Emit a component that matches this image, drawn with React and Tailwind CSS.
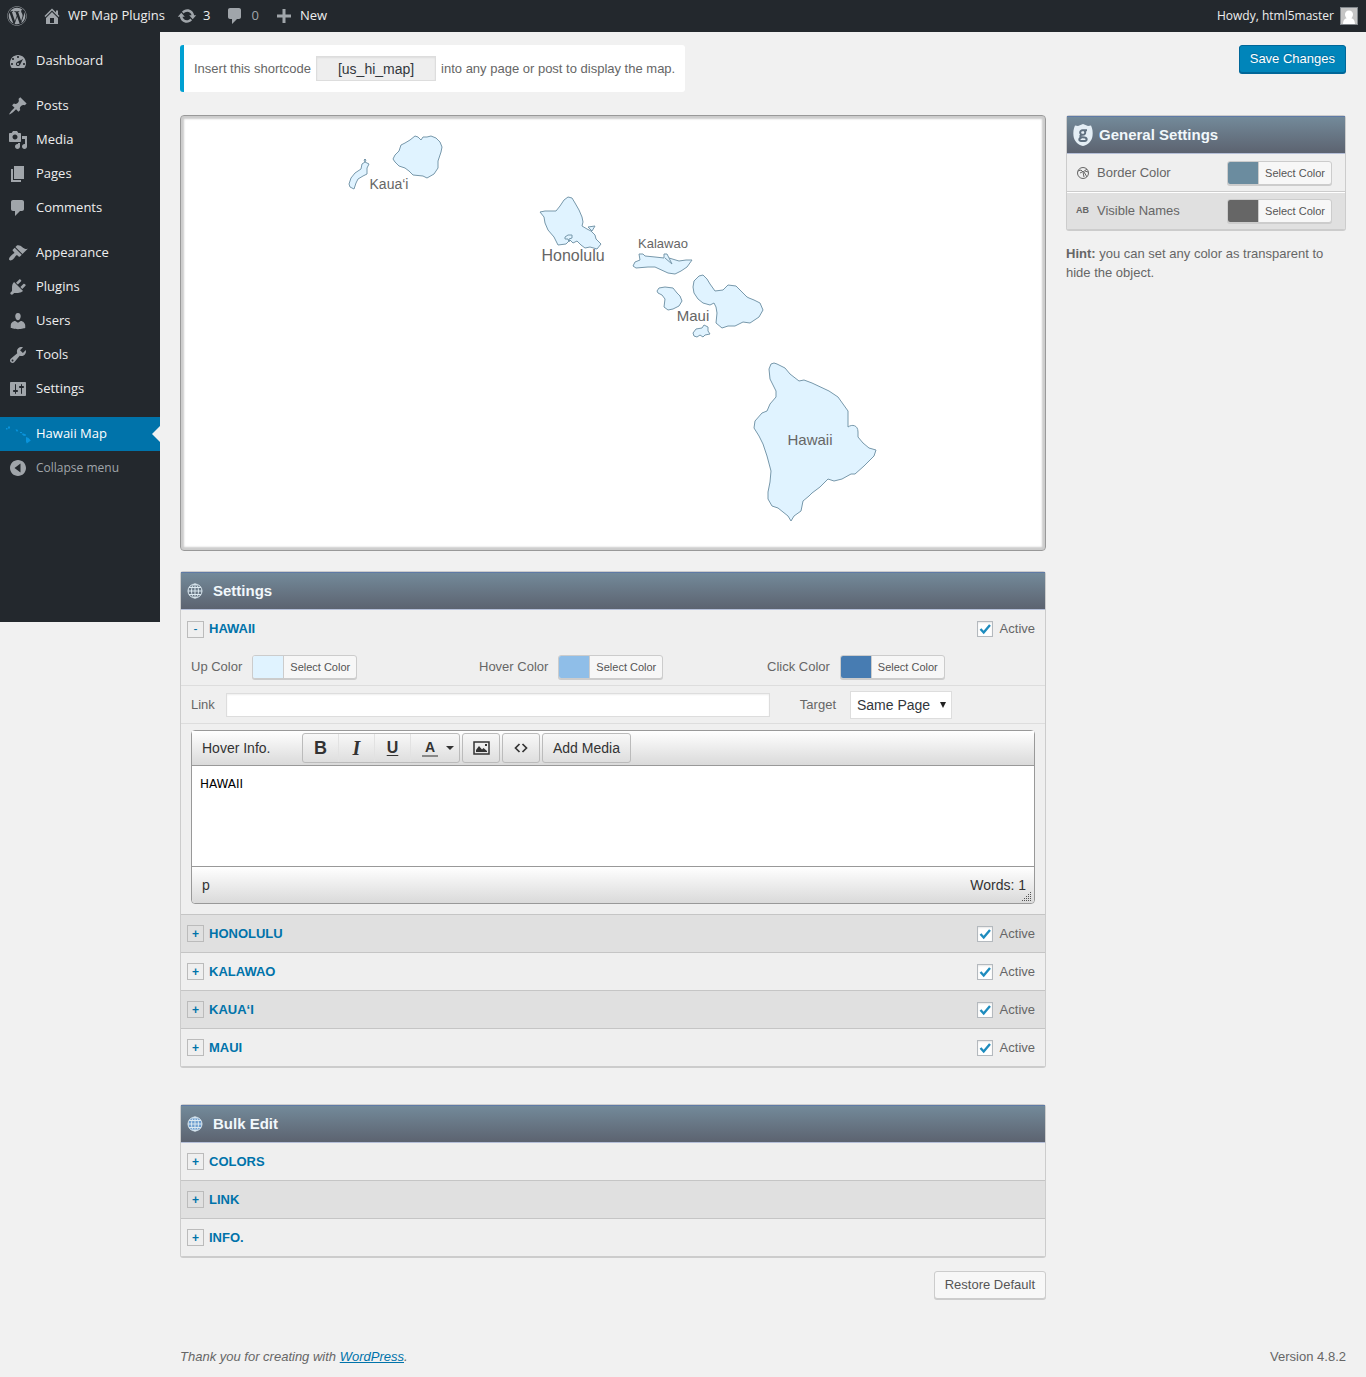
import { FaWordpress } from "react-icons/fa";
import clsx from "clsx";
import { useState } from "react";

const icons = {
  home: "M16 8.5l1.53 1.53-1.06 1.06L10 4.6l-6.47 6.49-1.06-1.06L10 2.5l4 4v-2h2v4zm-6-2.46l6 5.99V18H4v-5.97zM12 17v-5H8v5h4z",
  update:
    "M10.2 3.28c3.53 0 6.43 2.61 6.92 6h2.08l-3.5 4-3.5-4h2.32c-.45-1.97-2.21-3.45-4.32-3.45-1.45 0-2.73.71-3.54 1.78L4.95 5.66C6.23 4.2 8.11 3.28 10.2 3.28zm-.4 13.44c-3.52 0-6.43-2.61-6.92-6H.8l3.5-4c1.17 1.33 2.33 2.67 3.5 4H5.48c.45 1.97 2.21 3.45 4.32 3.45 1.45 0 2.73-.71 3.54-1.78l1.71 1.95c-1.28 1.46-3.15 2.38-5.25 2.38z",
  comments:
    "M5 2h9c1.1 0 2 .9 2 2v7c0 1.1-.9 2-2 2h-2l-5 5v-5H5c-1.1 0-2-.9-2-2V4c0-1.1.9-2 2-2z",
  plus: "M17 8.5v3h-5.5v5.5h-3v-5.5H3v-3h5.5V3h3v5.5z",
  dashboard:
    "M3.76 17.01h12.48C17.34 15.63 18 13.9 18 12c0-4.41-3.58-8-8-8s-8 3.59-8 8c0 1.9.66 3.63 1.76 5.01zM9 6c0-.55.45-1 1-1s1 .45 1 1c0 .56-.45 1-1 1s-1-.44-1-1zM4 8c0-.55.45-1 1-1s1 .45 1 1c0 .56-.45 1-1 1s-1-.44-1-1zm4.52 3.4c.84-.83 6.51-3.5 6.51-3.5s-2.66 5.68-3.49 6.51c-.84.84-2.18.84-3.02 0-.83-.83-.83-2.18 0-3.01zM3 13c0-.55.45-1 1-1s1 .45 1 1c0 .56-.45 1-1 1s-1-.44-1-1zm6 0c0 .55.45 1 1 1s1-.45 1-1c0-.56-.45-1-1-1s-1 .44-1 1zm6 0c0-.55.45-1 1-1s1 .45 1 1c0 .56-.45 1-1 1s-1-.44-1-1z",
  post: "M10.44 3.02l1.82-1.82 6.36 6.35-1.83 1.82c-1.05-.68-2.48-.57-3.41.36l-.75.75c-.92.93-1.04 2.35-.35 3.41l-1.83 1.82-2.41-2.41-2.8 2.79c-.42.42-3.38 2.71-3.8 2.29s1.86-3.39 2.28-3.81l2.79-2.79L4.1 9.36l1.83-1.82c1.05.69 2.48.57 3.4-.36l.75-.75c.93-.92 1.05-2.35.36-3.41z",
  media:
    "M13 11V4c0-.55-.45-1-1-1h-1.67L9 1H5L3.67 3H2c-.55 0-1 .45-1 1v7c0 .55.45 1 1 1h10c.55 0 1-.45 1-1zM7 4.5c1.38 0 2.5 1.12 2.5 2.5S8.38 9.5 7 9.5 4.5 8.38 4.5 7 5.62 4.5 7 4.5zM14 6h5v10.5c0 1.38-1.12 2.5-2.5 2.5S14 17.88 14 16.5s1.12-2.5 2.5-2.5c.17 0 .34.02.5.05V9h-3V6zm-4 8.05V13h2v3.5c0 1.38-1.12 2.5-2.5 2.5S7 17.88 7 16.5 8.12 14 9.5 14c.17 0 .34.02.5.05z",
  page: "M6 15V2h10v13H6zm-1 1h8v2H3V5h2v11z",
  appearance:
    "M14.48 11.06L7.41 3.99l1.5-1.5c.5-.56 2.3-.47 3.51.32 1.21.8 1.43 1.28 2.91 2.1 1.18.64 2.45 1.26 4.45.85zm-.71.71L6.7 4.7 4.93 6.47c-.39.39-.39 1.02 0 1.41l1.06 1.06c.39.39.39 1.03 0 1.42-.6.6-1.43 1.11-2.21 1.69-.35.26-.7.53-1.01.84C1.43 14.23.4 16.08 1.4 17.07c.99 1 2.84-.03 4.18-1.36.31-.31.58-.66.85-1.02.57-.78 1.08-1.61 1.69-2.21.39-.39 1.02-.39 1.41 0l1.06 1.06c.39.39 1.02.39 1.41 0z",
  plugins:
    "M13.11 4.36L9.87 7.6 8 5.73l3.24-3.24c.35-.34 1.05-.2 1.56.32.52.51.66 1.21.31 1.55zm-8 1.77l.91-1.12 9.01 9.01-1.19.84c-.71.71-2.63 1.16-3.82 1.16H6.14L4.9 17.26c-.59.59-1.54.59-2.12 0-.59-.58-.59-1.53 0-2.12l1.24-1.24v-3.88c0-1.13.4-3.19 1.09-3.89zm7.26 3.97l3.24-3.24c.34-.35 1.04-.21 1.55.31.52.51.66 1.21.31 1.55l-3.24 3.25z",
  users:
    "M10 9.25c-2.27 0-2.73-3.44-2.73-3.44C7 4.02 7.82 2 9.97 2c2.16 0 2.98 2.02 2.71 3.81 0 0-.41 3.44-2.68 3.44zm0 2.57L12.72 10c2.39 0 4.52 2.33 4.52 4.53v2.49s-3.65 1.13-7.24 1.13c-3.65 0-7.24-1.13-7.24-1.13v-2.49c0-2.25 1.94-4.48 4.47-4.48z",
  tools:
    "M16.68 9.77c-1.34 1.34-3.3 1.67-4.95.99l-5.41 6.52c-.99.99-2.59.99-3.58 0s-.99-2.59 0-3.57l6.52-5.42c-.68-1.65-.35-3.61.99-4.95 1.28-1.28 3.12-1.62 4.72-1.06l-2.89 2.89 2.82 2.82 2.86-2.87c.53 1.58.18 3.39-1.08 4.65zM3.81 16.21c.4.39 1.04.39 1.43 0 .4-.4.4-1.04 0-1.43-.39-.4-1.03-.4-1.43 0-.39.39-.39 1.03 0 1.43z",
  settings:
    "M18 16V4c0-.55-.45-1-1-1H3c-.55 0-1 .45-1 1v12c0 .55.45 1 1 1h14c.55 0 1-.45 1-1zM8 11h1c.55 0 1 .45 1 1s-.45 1-1 1H8v1.5c0 .28-.22.5-.5.5s-.5-.22-.5-.5V13H6c-.55 0-1-.45-1-1s.45-1 1-1h1V5.5c0-.28.22-.5.5-.5s.5.22.5.5V11zm5-2h-1c-.55 0-1-.45-1-1s.45-1 1-1h1V5.5c0-.28.22-.5.5-.5s.5.22.5.5V7h1c.55 0 1 .45 1 1s-.45 1-1 1h-1v5.5c0 .28-.22.5-.5.5s-.5-.22-.5-.5V9z",
  collapse:
    "M10 2c4.42 0 8 3.58 8 8s-3.58 8-8 8-8-3.58-8-8 3.58-8 8-8zM12.5 14.5v-9L6.5 10z",
};

const menuGroups = [
  [{ label: "Dashboard", icon: "dashboard" }],
  [
    { label: "Posts", icon: "post" },
    { label: "Media", icon: "media" },
    { label: "Pages", icon: "page" },
    { label: "Comments", icon: "comments" },
  ],
  [
    { label: "Appearance", icon: "appearance" },
    { label: "Plugins", icon: "plugins" },
    { label: "Users", icon: "users" },
    { label: "Tools", icon: "tools" },
    { label: "Settings", icon: "settings" },
  ],
];

const islands = [
  // Kaua'i
  "M349 184L351 178 355 173 361 169 362 164 365 162 369 164 367 168 367 174 363 176 358 179 356 183 354 189 350 187z",
  "M364 160l1-1 1 1-1 2z",
  "M393 159L395 155 399 151 401 145 405 143 410 140 415 136 418 137 421 140 423 137 427 137 431 136 436 138 440 142 442 147 441 152 439 158 438 161 438 168 434 174 427 178 423 176 413 175 409 171 405 168 399 166 395 162z",
  // Honolulu
  "M540 212L545 211 556 211 560 206 564 200 568 197 572 198 575 203 579 210 582 217 583 222 582 226 587 229 591 231 595 235 596 239 601 244 597 249 590 247 585 248 581 245 577 241 573 243 570 240 566 244 558 245 554 237 548 230 545 223 544 217z",
  "M588 227l7-1-3 5zM565 237l3-2 4 0 0 3-3 1 0 3-1-3-3 0z",
  // Kalawao
  "M633 266L635 262 640 260 639 254 643 254 645 256 655 257 664 258 664 254 667 254 669 258 679 261 686 260 692 260 687 267 681 271 675 274 668 273 655 267 648 267 636 268z",
  "M665 258l7 6-3-6",
  // Maui
  "M657 291L659 288 665 287 673 288 677 293 680 296 682 301 679 306 673 309 668 310 664 307 665 299 662 295 658 293z",
  "M693 287L694 281 699 276 703 275 707 279 710 284 715 291 723 290 728 285 736 286 742 292 747 297 749 298 754 300 760 303 763 310 759 317 750 323 743 322 735 326 728 326 722 328 716 323 717 313 716 307 714 303 710 305 703 303 698 299 694 293z",
  "M693 333L696 329 702 328 704 325 708 327 708 331 710 334 705 335 703 337 700 335 697 337 694 336z",
  // Hawaii
  "M774 363L777 364 785 368 790 374 799 381 804 380 812 383 829 391 838 397 848 411 848 427C852 424 858 425 858 432L858 437 863 443 869 448 876 450 874 456 864 466 855 474 851 474 842 479 834 481 828 479 820 487 812 493 809 496 803 501 801 511 794 516 791 521 788 516 778 508 772 506 768 499 768 492 770 482 771 471 767 456 763 444 759 436 754 428 755 421 762 413 767 411 770 404 776 397 776 391 770 379 769 369 771 364z",
];

const mapLabels = [
  { text: "Kaua‘i", x: 389, y: 189, size: 14 },
  { text: "Honolulu", x: 573, y: 261, size: 16 },
  { text: "Kalawao", x: 663, y: 248, size: 13 },
  { text: "Maui", x: 693, y: 321, size: 15 },
  { text: "Hawaii", x: 810, y: 445, size: 15 },
];

function Dashicon({ name, className }) {
  return (
    <svg
      viewBox="0 0 20 20"
      fill="currentColor"
      fillRule="evenodd"
      className={clsx("size-5 shrink-0", className)}
    >
      <path d={icons[name]} />
    </svg>
  );
}

function AdminBar() {
  return (
    <header className="flex h-8 items-center justify-between bg-[#23282d] pr-2 pl-[7px] font-['Open_Sans',sans-serif] text-[13px] text-[#eee]">
      <div className="flex items-center">
        <a href="#wp" aria-label="About WordPress">
          <FaWordpress className="size-5 text-[#a0a5aa]" />
        </a>
        <a href="#site" className="ml-[15px] flex items-center gap-1.5">
          <Dashicon name="home" className="text-[#a0a5aa]" />
          WP Map Plugins
        </a>
        <a href="#updates" className="ml-3 flex items-center gap-1.5">
          <Dashicon name="update" className="text-[#a0a5aa]" />3
        </a>
        <a href="#comments" className="ml-[15px] flex items-center gap-1.5">
          <Dashicon name="comments" className="text-[#a0a5aa]" />
          <span className="text-[#a0a5aa]">0</span>
        </a>
        <a href="#new" className="ml-[15px] flex items-center gap-1.5">
          <Dashicon name="plus" className="text-[#a0a5aa]" />
          New
        </a>
      </div>
      <a href="#profile" className="flex items-center gap-1.5 text-xs">
        Howdy, html5master
        <svg viewBox="0 0 18 18" className="size-[18px]">
          <path d="M0 0h18v18H0z" fill="#82878c" />
          <path d="M1 1h16v16H1z" fill="#c5c5c5" />
          <path
            d="M9 3.5c2.6 0 4 1.8 4 4 0 1.5-.7 2.9-1.7 3.7 2 .6 3.5 1.7 3.7 5.8H3c.2-4.1 1.7-5.2 3.7-5.8C5.7 10.4 5 9 5 7.5c0-2.2 1.4-4 4-4z"
            fill="#fff"
          />
        </svg>
      </a>
    </header>
  );
}

function Sidebar() {
  return (
    <nav className="w-40 shrink-0 self-start bg-[#23282d] pt-3 pb-[137px] font-['Open_Sans',sans-serif] text-[13px] text-[#eee]">
      {menuGroups.map((group, index) => (
        <ul key={`menu-group-${index}`} className="mb-[11px]">
          {group.map((item) => (
            <li key={item.label}>
              <a
                href={`#${item.icon}`}
                className="flex h-[34px] items-center gap-2 pl-2"
              >
                <Dashicon name={item.icon} className="text-[#a0a5aa]" />
                {item.label}
              </a>
            </li>
          ))}
        </ul>
      ))}
      <a
        href="#hawaii-map"
        className="relative flex h-[34px] items-center gap-2 bg-[#0073aa] pl-2 text-white"
      >
        <svg
          viewBox="0 0 20 20"
          fill="#0a94dc"
          className="size-5 shrink-0 overflow-visible"
        >
          <path d="M-2 4h1.5v1.5H-2zM0 2.5h2v2H0zM7.500 5.500h1.800l1 1.700-1.800.3zM12 8h2v1h-2zM13.500 9.800l2-.3 2.500 1-.5 1.500-2-.3zM18 13l2.500 1 2.300 2.500-2 1.500-2 1.500-.8-2z" />
        </svg>
        Hawaii Map
        <span className="absolute top-[9px] right-0 border-y-8 border-r-8 border-y-transparent border-r-[#f1f1f1]" />
      </a>
      <button
        type="button"
        className="flex h-[34px] items-center gap-2 pl-2 text-xs text-[#a0a5aa]"
      >
        <Dashicon name="collapse" />
        Collapse menu
      </button>
    </nav>
  );
}

function IslandMap() {
  return (
    <div className="rounded border border-[#999] bg-white p-px shadow-[inset_0_0_2px_3px_#ccc]">
      <svg viewBox="182 117 862 432" className="block w-full">
        <g fill="#e0f3ff" stroke="#7798ab" strokeLinejoin="round">
          {islands.map((d) => (
            <path key={d} d={d} />
          ))}
        </g>
        <g fill="#666" textAnchor="middle">
          {mapLabels.map((label) => (
            <text
              key={label.text}
              x={label.x}
              y={label.y}
              fontSize={label.size}
            >
              {label.text}
            </text>
          ))}
        </g>
      </svg>
    </div>
  );
}

function ColorPicker({ label, color }) {
  return (
    <button
      type="button"
      aria-label={`${label}: Select Color`}
      className="flex h-6 overflow-hidden rounded-[3px] border border-[#ccc] bg-[#f7f7f7] text-[11px] text-[#555] shadow-[0_1px_0_#ccc]"
    >
      <span className={clsx("h-full w-[30px]", color)} />
      <span className="h-full border-l border-[#ccc] px-1.5 leading-[22px]">
        Select Color
      </span>
    </button>
  );
}

function Globe({ className }) {
  return (
    <svg
      viewBox="0 0 16 16"
      fill="none"
      stroke="#dbe8f0"
      className={clsx("size-4 shrink-0", className)}
    >
      <circle cx="8" cy="8" r="7" fill="currentColor" />
      <ellipse cx="8" cy="8" rx="3.5" ry="7" />
      <path d="M8 1v14M1 8h14M2 4.5h12M2 11.5h12" />
    </svg>
  );
}

function PanelHeader({ icon, title, className }) {
  return (
    <h2
      className={clsx(
        "flex h-[38px] items-center border-t border-b border-t-[#5f7aa5] border-b-[#b5bfd8] bg-linear-to-b from-[#738a9a] to-[#5c6370] pl-1.5 text-[15px] font-bold text-[#f1f7fb]",
        className
      )}
    >
      {icon}
      {title}
    </h2>
  );
}

function SectionToggle({ label, open, onToggle }) {
  return (
    <button
      type="button"
      onClick={onToggle}
      aria-expanded={open}
      className="flex items-center gap-[5px] text-[13px] font-bold text-[#0073aa] uppercase"
    >
      <span
        className={clsx(
          "flex size-[17px] items-center justify-center border border-[#bbb] text-xs leading-none",
          open && "font-normal"
        )}
      >
        {open ? "-" : "+"}
      </span>
      {label}
    </button>
  );
}

function ActiveCheckbox() {
  return (
    <label className="flex items-center gap-[7px]">
      <span className="grid size-4">
        <input
          type="checkbox"
          defaultChecked
          className="peer col-start-1 row-start-1 size-4 appearance-none border border-[#b4b9be] bg-white shadow-[inset_0_1px_2px_rgba(0,0,0,0.1)]"
        />
        <svg
          viewBox="0 0 16 16"
          fill="none"
          stroke="#1e8cbe"
          strokeWidth="2.4"
          className="pointer-events-none invisible col-start-1 row-start-1 size-4 peer-checked:visible"
        >
          <path d="M3.5 8l3.2 3.500L13 4" />
        </svg>
      </span>
      Active
    </label>
  );
}

const toolButton =
  "flex h-[30px] items-center justify-center rounded-[3px] border border-[#bbb] bg-linear-to-b from-[#f8f8f8] to-[#dedede] text-[#333]";

function Editor() {
  return (
    <div className="mx-2.5 my-1.5 rounded-sm border border-[#999] bg-white text-sm text-[#333]">
      <div className="flex h-[35px] items-center gap-0.5 border-b border-[#999] bg-linear-to-b from-white to-[#dadada]">
        <span className="w-[108px] pl-2.5">Hover Info.</span>
        <div className="flex h-[30px] rounded-[3px] border border-[#bbb] bg-linear-to-b from-[#f8f8f8] to-[#dedede]">
          <button
            type="button"
            className="w-9 border-r border-[#e2e2e2] text-lg leading-none font-bold"
          >
            B
          </button>
          <button
            type="button"
            className="w-9 border-r border-[#e2e2e2] font-['Liberation_Serif',serif] text-xl leading-none font-bold italic"
          >
            I
          </button>
          <button
            type="button"
            className="w-9 border-r border-[#e2e2e2] text-base leading-none font-bold underline underline-offset-2"
          >
            U
          </button>
          <button
            type="button"
            aria-label="Text color"
            className="flex w-12 items-center justify-end gap-2 pr-[5px] font-bold"
          >
            <span className="border-b-2 border-[#888] px-[3px] leading-4">
              A
            </span>
            <span className="border-x-4 border-t-4 border-x-transparent border-t-[#333]" />
          </button>
        </div>
        <button
          type="button"
          aria-label="Insert image"
          className={clsx(toolButton, "w-[38px]")}
        >
          <svg viewBox="0 0 17 14" className="h-3.5 w-[17px]">
            <path d="M1 1h15v12H1z" fill="none" stroke="#333" strokeWidth="1.5" />
            <path d="M3 11V9l3-4 3 3.5L10.500 7 14 10v1zM12 3h2v2h-2z" fill="#333" />
          </svg>
        </button>
        <button
          type="button"
          aria-label="Source code"
          className={clsx(toolButton, "w-[38px]")}
        >
          <svg viewBox="0 0 14 10" className="h-2.5 w-3.5">
            <path
              d="M5.5 1l-4 4 4 4M8.500 1l4 4-4 4"
              fill="none"
              stroke="#333"
              strokeWidth="1.7"
            />
          </svg>
        </button>
        <button type="button" className={clsx(toolButton, "px-2.5")}>
          Add Media
        </button>
      </div>
      <textarea
        aria-label="Hover Info."
        defaultValue="HAWAII"
        className="block h-[100px] w-full resize-none p-2 pt-2.5 font-['DejaVu_Sans',sans-serif] text-xs text-black outline-none"
      />
      <div className="flex h-[37px] items-center justify-between rounded-b-sm border-t border-[#999] bg-linear-to-b from-white to-[#dadada] pl-2.5">
        <span>p</span>
        <div className="flex h-full items-end">
          <span className="self-center">Words: 1</span>
          <svg
            viewBox="0 0 10 10"
            className="mr-0.5 mb-0.5 -ml-1 size-2.5"
            fill="#555"
          >
            <path d="M0 9h1v1H0zM2 9h1v1H2zM4 9h1v1H4zM6 9h1v1H6zM8 9h1v1H8zM2 7h1v1H2zM4 7h1v1H4zM6 7h1v1H6zM8 7h1v1H8zM4 5h1v1H4zM6 5h1v1H6zM8 5h1v1H8zM6 3h1v1H6zM8 3h1v1H8zM8 1h1v1H8z" />
          </svg>
        </div>
      </div>
    </div>
  );
}

function RegionForm() {
  return (
    <div>
      <div className="grid h-[38px] grid-cols-3 items-center border-b border-[#ddd]">
        <div className="flex items-center gap-2.5 pl-2.5">
          Up Color
          <ColorPicker label="Up Color" color="bg-[#e0f3ff]" />
        </div>
        <div className="flex items-center gap-2.5 pl-2.5">
          Hover Color
          <ColorPicker label="Hover Color" color="bg-[#8fbee8]" />
        </div>
        <div className="flex items-center gap-2.5 pl-2.5">
          Click Color
          <ColorPicker label="Click Color" color="bg-[#477cb2]" />
        </div>
      </div>
      <div className="flex h-[38px] items-center border-b border-[#ddd] pr-[93px] pl-2.5">
        <label htmlFor="link">Link</label>
        <input
          id="link"
          type="text"
          className="mr-[30px] ml-[11px] h-6 min-w-0 flex-1 border border-[#ddd] bg-white px-1 shadow-[inset_0_1px_2px_rgba(0,0,0,0.07)]"
        />
        <label htmlFor="target">Target</label>
        <div className="ml-3.5 grid items-center">
          <select
            id="target"
            className="col-start-1 row-start-1 h-7 w-[102px] appearance-none border border-[#ddd] bg-white pl-1.5 text-sm text-[#32373c]"
          >
            <option>Same Page</option>
            <option>New Page</option>
          </select>
          <span className="pointer-events-none col-start-1 row-start-1 mr-1.5 justify-self-end border-x-[3px] border-t-[6px] border-x-transparent border-t-[#222]" />
        </div>
      </div>
      <Editor />
    </div>
  );
}

function Panel({ icon, title, sections, withActive, initialOpen }) {
  const [openSection, setOpenSection] = useState(initialOpen);

  return (
    <section className="rounded-[3px] border border-[#ccc] bg-[#efefef] shadow-[0_1px_0_#ccc]">
      <PanelHeader icon={icon} title={title} className="gap-2.5" />
      {sections.map((name, index) => {
        const open = openSection === name;
        return (
          <div
            key={name}
            className={clsx(
              "border-[#c5c5c5] not-last:border-b",
              index % 2 ? "bg-[#e0e0e0]" : "bg-[#efefef]",
              open && "pb-1"
            )}
          >
            <div
              className={clsx(
                "flex items-center justify-between pr-2.5 pl-1.5",
                open ? "h-[38px]" : "h-[37px]"
              )}
            >
              <SectionToggle
                label={name}
                open={open}
                onToggle={() => setOpenSection(open ? null : name)}
              />
              {withActive && <ActiveCheckbox />}
            </div>
            {open && withActive && <RegionForm />}
          </div>
        );
      })}
    </section>
  );
}

function GeneralSettings() {
  return (
    <aside className="w-[280px] shrink-0">
      <section className="rounded-[3px] border border-[#ccc] bg-[#efefef] shadow-[0_1px_0_#ccc]">
        <PanelHeader
          title="General Settings"
          className="gap-1.5"
          icon={
            <svg viewBox="0 0 20 22" className="h-[22px] w-5">
              <path
                d="M2 1.5L5 2l5-2 5 2 3-.5c1.5 3 2 7 1.5 10.5C19 17 15 21 10 22 5 21 1 17 .5 12 0 8.5.5 4.500 2 1.500z"
                fill="#e4eef5"
              />
              <path
                d="M14 6.200h-4.500a2.300 2.300 0 100 4.600h.5a2.300 2.300 0 001.500-4M8 11c-1.500 1.500-.5 2.300 1.500 2.300 3 0 4.200.4 4.200 1.900s-1.700 1.900-3.700 1.900-3.700-.4-3.700-1.700 1-1.700 2.500-2"
                fill="none"
                stroke="#5f7080"
                strokeWidth="2"
              />
            </svg>
          }
        />
        <div className="flex h-[38px] items-center border-b border-[#ccc] pr-[13px] pl-[9px]">
          <svg
            viewBox="0 0 14 14"
            fill="none"
            stroke="#666"
            className="mr-[7px] size-3.5"
          >
            <circle cx="7" cy="7" r="5.5" />
            <path d="M2 5l3-1 2 2 4-3M7 6l1 5M6 6l-2 1M8 6l3 5M9 5l3 1" />
          </svg>
          Border Color
          <div className="ml-auto">
            <ColorPicker label="Border Color" color="bg-[#6b8c9f]" />
          </div>
        </div>
        <div className="flex h-[37px] items-center border-t border-white bg-[#e0e0e0] pr-[13px] pl-[9px]">
          <span className="mr-[7px] w-3.5 text-[9px] font-bold">AB</span>
          Visible Names
          <div className="ml-auto">
            <ColorPicker label="Visible Names" color="bg-[#666]" />
          </div>
        </div>
      </section>
      <p className="mt-3.5 leading-[19px]">
        <b>Hint:</b> you can set any color as transparent to hide the object.
      </p>
    </aside>
  );
}

export default function App() {
  return (
    <div className="min-h-screen bg-[#f1f1f1] font-['Liberation_Sans',Arial,sans-serif] text-[13px] text-[#666]">
      <AdminBar />
      <div className="flex">
        <Sidebar />
        <div className="min-w-0 flex-1 px-5 pt-[13px]">
          <div className="flex items-start justify-between">
            <div className="flex h-[47px] items-center rounded-[3px] border-l-4 border-[#00a0d2] bg-white px-2.5">
              <label htmlFor="shortcode">Insert this shortcode</label>
              <input
                id="shortcode"
                readOnly
                value="[us_hi_map]"
                className="mx-[5px] h-[25px] w-[120px] border border-[#ddd] bg-[#eee] text-center text-sm text-[#32373c] shadow-[inset_0_1px_2px_rgba(0,0,0,0.07)]"
              />
              into any page or post to display the map.
            </div>
            <button
              type="button"
              className="h-7 rounded-[3px] border border-[#006799] bg-[#0085ba] px-2.5 text-[13px] font-medium text-white shadow-[0_1px_0_#006799] text-shadow-[0_-1px_1px_#006799]"
            >
              Save Changes
            </button>
          </div>
          <div className="mt-[23px] flex items-start gap-5">
            <main className="min-w-0 flex-1">
              <IslandMap />
              <div className="mt-5">
                <Panel
                  icon={<Globe className="text-transparent" />}
                  title="Settings"
                  sections={[
                    "Hawaii",
                    "Honolulu",
                    "Kalawao",
                    "Kaua‘i",
                    "Maui",
                  ]}
                  initialOpen="Hawaii"
                  withActive
                />
              </div>
              <div className="mt-[37px]">
                <Panel
                  icon={<Globe className="text-[#6f9fd0]" />}
                  title="Bulk Edit"
                  sections={["Colors", "Link", "Info."]}
                />
              </div>
              <button
                type="button"
                className="mt-3.5 ml-auto block h-7 rounded-[3px] border border-[#ccc] bg-[#f7f7f7] px-2.5 text-[#555] shadow-[0_1px_0_#ccc]"
              >
                Restore Default
              </button>
            </main>
            <GeneralSettings />
          </div>
          <footer className="mt-12 flex justify-between pb-2.5 leading-5">
            <p className="italic">
              Thank you for creating with{" "}
              <a href="#wordpress" className="text-[#0073aa] underline">
                WordPress
              </a>
              .
            </p>
            <p>Version 4.8.2</p>
          </footer>
        </div>
      </div>
    </div>
  );
}
